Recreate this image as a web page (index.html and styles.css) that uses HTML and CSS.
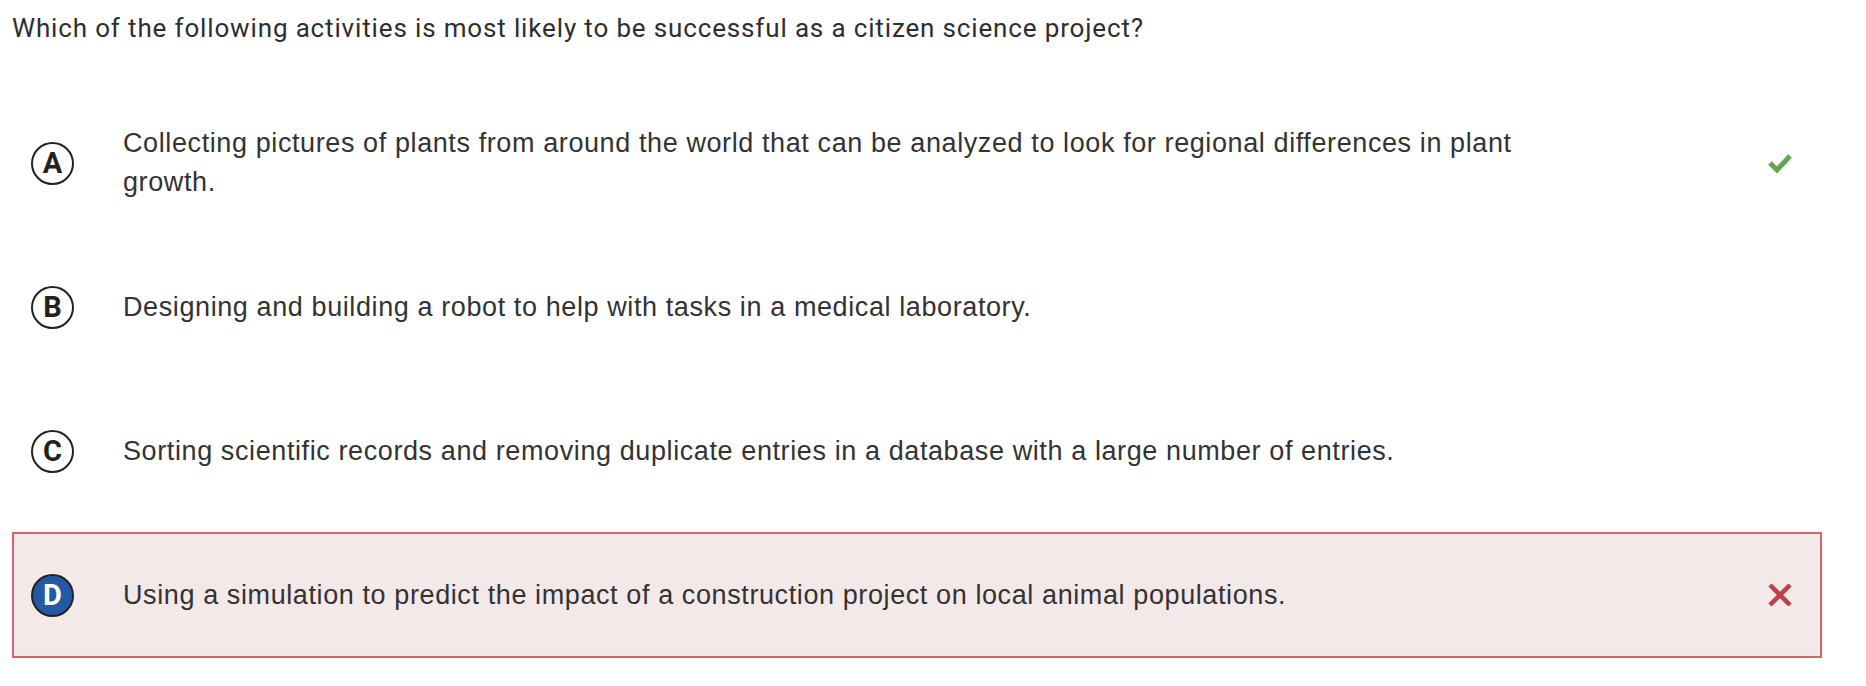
FILE: index.html
```html
<!DOCTYPE html>
<html lang="en">
<head>
  <meta charset="UTF-8">
  <meta name="viewport" content="width=device-width, initial-scale=1.0">
  <title>Question</title>
  <link rel="stylesheet" href="styles.css">
</head>
<body>

  <div class="question-container">
    <p class="question-text">Which of the following activities is most likely to be successful as a citizen science project?</p>

    <div class="choice-list">
      <div class="choice correct">
        <div class="choice-letter">A</div>
        <div class="choice-text">Collecting pictures of plants from around the world that can be analyzed to look for regional differences in plant growth.</div>
        <div class="choice-mark">
          <svg width="26" height="22" viewBox="0 0 26 22">
            <polyline points="3,11 10,18 23,4" fill="none" stroke="#62a64f" stroke-width="5"/>
          </svg>
        </div>
      </div>
      <div class="choice">
        <div class="choice-letter">B</div>
        <div class="choice-text">Designing and building a robot to help with tasks in a medical laboratory.</div>
        <div class="choice-mark"></div>
      </div>
      <div class="choice">
        <div class="choice-letter">C</div>
        <div class="choice-text">Sorting scientific records and removing duplicate entries in a database with a large number of entries.</div>
        <div class="choice-mark"></div>
      </div>
      <!-- 선택했지만 틀린 답 -->
      <div class="choice selected wrong">
        <div class="choice-letter">D</div>
        <div class="choice-text">Using a simulation to predict the impact of a construction project on local animal populations.</div>
        <div class="choice-mark">
          <svg width="26" height="22" viewBox="0 0 26 22">
            <path d="M3,1 L23,21 M23,1 L3,21" fill="none" stroke="#c13f4d" stroke-width="4.5"/>
          </svg>
        </div>
      </div>
    </div>
  </div>

</body>
</html>
```

FILE: styles.css
```css
body {
  margin: 0;
  background-color: white;
  font-family: 'Liberation Sans', Arial, sans-serif;
  color: #333;
}
.question-container {
  width: 1810px;
  padding: 13px 12px 0;
}
.question-text {
  margin: 0 0 57px;
  font-family: Roboto, 'Liberation Sans', sans-serif;
  font-size: 26px;
  line-height: 30px;
  letter-spacing: 0.85px;
  color: #2e2e2e;
}
.choice-list {
  display: flex;
  flex-direction: column;
  gap: 18px;
}
.choice {
  display: flex;
  align-items: center;
  min-height: 122px;
  padding: 0 27px 0 17px;
  border: 2px solid transparent;
}
.choice.selected {
  background-color: #f4e9e9;
  border-color: #d9636b;
}
.choice-letter {
  width: 39px;
  height: 39px;
  flex-shrink: 0;
  border: 2px solid #222;
  border-radius: 50%;
  display: flex;
  justify-content: center;
  align-items: center;
  font-family: Roboto, 'Liberation Sans', sans-serif;
  font-size: 29px;
  font-weight: bold;
  color: #222;
}
.choice.selected .choice-letter {
  background-color: #2459a8;
  color: white;
}
.choice-text {
  flex: 1;
  margin: 0 200px 0 49px;
  font-size: 27px;
  line-height: 39px;
  letter-spacing: 0.6px;
}
.choice-mark {
  width: 26px;
  height: 22px;
  flex-shrink: 0;
}
.choice-mark svg {
  display: block;
}
```
